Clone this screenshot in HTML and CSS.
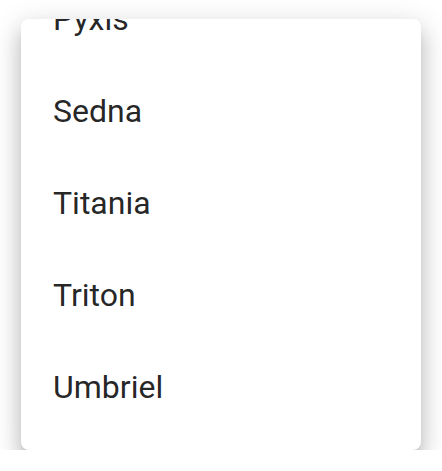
FILE: index.html
```html
<!DOCTYPE html>
<html>
<head>
<meta charset="utf-8">
<link rel="stylesheet" href="styles.css">
</head>
<body>
<div class="menu">
  <ul class="list">
    <li class="item">Pyxis</li>
    <li class="item">Sedna</li>
    <li class="item">Titania</li>
    <li class="item">Triton</li>
    <li class="item">Umbriel</li>
  </ul>
</div>
</body>
</html>
```
FILE: styles.css
```css
html, body {
  margin: 0;
  padding: 0;
  background: #fff;
}
body {
  padding: 19px 0 0 21px;
}
.menu {
  width: 400px;
  height: 431px;
  box-sizing: border-box;
  background: #fff;
  border-radius: 8px;
  overflow: hidden;
  padding-bottom: 17px;
  display: flex;
  flex-direction: column;
  justify-content: flex-end;
  box-shadow: 0 10px 10px -6px rgba(0,0,0,0.2), 0 15px 19px 2px rgba(0,0,0,0.14), 0 6px 27px 4px rgba(0,0,0,0.12);
}
.list {
  list-style: none;
  margin: 0;
  padding: 0;
}
.item {
  height: 92px;
  display: flex;
  align-items: center;
  padding-left: 32px;
  font-family: Roboto, "Liberation Sans", sans-serif;
  font-size: 32px;
  color: rgba(0,0,0,0.87);
}
```
